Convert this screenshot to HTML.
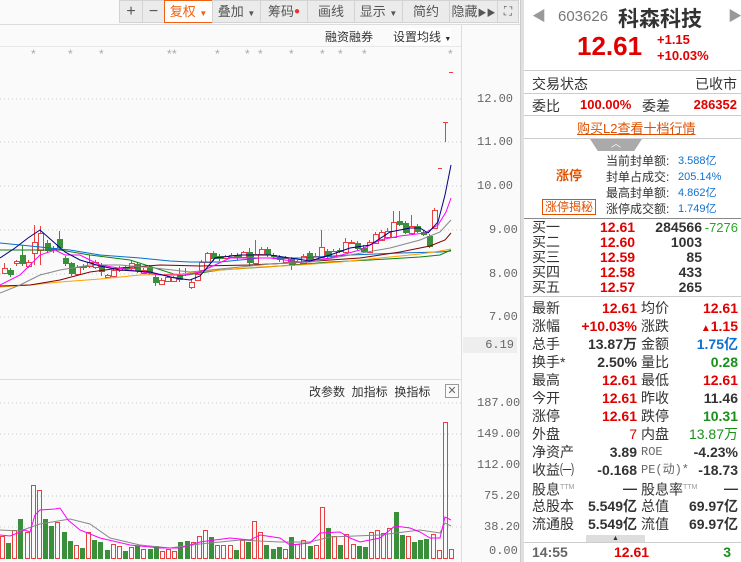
<!DOCTYPE html>
<html><head><meta charset="utf-8">
<style>
*{margin:0;padding:0;box-sizing:border-box}
body{width:741px;height:562px;overflow:hidden;background:#fafafa;font-family:"Liberation Sans","Noto Sans CJK SC",sans-serif;position:relative;color:#333}
.a{position:absolute;white-space:nowrap}
.tb{position:absolute;top:0;height:23px;background:#ebebeb;border:1px solid #d3d3d3;font-size:13px;color:#555;text-align:center;line-height:21px}
.rp{position:absolute;left:524px;top:0;width:217px;height:562px;background:#fff}
.lb{font-size:14px;color:#333}
.r{color:#e00000}.g{color:#1a8f1a}.b{color:#1070d0}.k{color:#333}
.sep{position:absolute;left:0;width:217px;height:1px;background:#ccc}
.ax{font-family:"Liberation Mono",monospace;font-size:12px;color:#666}
.row{position:absolute;left:0;width:217px;height:18px;line-height:18px;font-size:14px}
.row span{position:absolute;top:0;white-space:nowrap}
.l1{left:8px}.l2{left:117px}
.v1{right:104px;font-weight:bold}.v2{right:3px;font-weight:bold}
.br{position:absolute;left:0;width:217px;height:15px;line-height:15px;font-size:14px}
.br span{position:absolute;top:0;white-space:nowrap;font-weight:bold}
</style></head><body>
<div class="tb" style="left:119px;width:24px;font-size:16px">+</div>
<div class="tb" style="left:142px;width:23px;font-size:16px">−</div>
<div class="tb" style="left:164px;width:49px;border:1px solid #f06010;background:#fff;color:#f06010">复权 <span style="font-size:8px">▼</span></div>
<div class="tb" style="left:212px;width:49px">叠加 <span style="font-size:8px">▼</span></div>
<div class="tb" style="left:260px;width:48px">筹码<span style="color:#f03030;font-size:10px;vertical-align:top">●</span></div>
<div class="tb" style="left:307px;width:48px">画线</div>
<div class="tb" style="left:354px;width:49px">显示 <span style="font-size:8px">▼</span></div>
<div class="tb" style="left:402px;width:48px">简约</div>
<div class="tb" style="left:449px;width:49px">隐藏<span style="font-size:9px">▶▶</span></div>
<div class="tb" style="left:497px;width:22px;font-size:12px">⛶</div>
<div class="a" style="left:0;top:24px;width:520px;height:1px;background:#ddd"></div>
<div class="a" style="left:0;top:46px;width:461px;height:1px;background:#e8e8e8"></div>
<div class="a" style="left:461px;top:24px;width:1px;height:538px;background:#ddd"></div>
<div class="a" style="left:0;top:379px;width:461px;height:1px;background:#ddd"></div>
<div class="a" style="left:520px;top:0;width:4px;height:562px;background:#e0e0e0;border-left:1px solid #ccc"></div>
<div class="a" style="left:325px;top:28px;font-size:12px;color:#333">融资融券</div>
<div class="a" style="left:393px;top:28px;font-size:12px;color:#333;background:#fff">设置均线 <span style="font-size:7px">▼</span></div>
<div class="a" style="left:309px;top:383px;font-size:12px;color:#333">改参数&nbsp;&nbsp;加指标&nbsp;&nbsp;换指标</div>
<div class="a" style="left:445px;top:384px;width:14px;height:14px;border:1px solid #999;font-size:11px;line-height:12px;text-align:center;color:#666">✕</div>
<div class="a ax" style="left:477px;top:92px">12.00</div>
<div class="a ax" style="left:477px;top:135px">11.00</div>
<div class="a ax" style="left:477px;top:179px">10.00</div>
<div class="a ax" style="left:489px;top:223px">9.00</div>
<div class="a ax" style="left:489px;top:267px">8.00</div>
<div class="a ax" style="left:489px;top:310px">7.00</div>
<div class="a ax" style="left:463px;top:337px;width:54px;height:16px;background:#eee;text-align:right;padding-right:3px;line-height:16px">6.19</div>
<div class="a ax" style="left:477px;top:396px">187.00</div>
<div class="a ax" style="left:477px;top:427px">149.00</div>
<div class="a ax" style="left:477px;top:458px">112.00</div>
<div class="a ax" style="left:484px;top:489px">75.20</div>
<div class="a ax" style="left:484px;top:520px">38.20</div>
<div class="a ax" style="left:489px;top:544px">0.00</div>
<svg id="ch" class="a" style="left:0;top:0" width="461" height="562"></svg>
<div class="rp">
<div class="a" style="left:8px;top:6px;font-size:14px;color:#999">◀</div>
<div class="a" style="left:34px;top:8px;font-size:15px;color:#777">603626</div>
<div class="a" style="left:94px;top:3px;font-size:21px;font-weight:bold;color:#333">科森科技</div>
<div class="a" style="left:204px;top:6px;font-size:14px;color:#999">▶</div>
<div class="a r" style="left:53px;top:31px;font-size:26px;font-weight:bold">12.61</div>
<div class="a r" style="left:133px;top:32px;font-size:13px;font-weight:bold">+1.15</div>
<div class="a r" style="left:133px;top:48px;font-size:13px;font-weight:bold">+10.03%</div>
<div class="sep" style="top:70px"></div>
<div class="a lb" style="left:8px;top:74px">交易状态</div>
<div class="a lb" style="right:4px;top:74px">已收市</div>
<div class="sep" style="top:93px"></div>
<div class="a lb" style="left:8px;top:96px">委比</div>
<div class="a r" style="left:56px;top:97px;font-size:13px;font-weight:bold">100.00%</div>
<div class="a lb" style="left:118px;top:96px">委差</div>
<div class="a r" style="right:4px;top:97px;font-size:13px;font-weight:bold">286352</div>
<div class="sep" style="top:115px"></div>
<div class="a" style="left:53px;top:118px;font-size:13px;color:#e05000;text-decoration:underline">购买L2查看十档行情</div>
<div class="sep" style="top:138px"></div>
<div class="a" style="left:66px;top:139px;width:52px;height:12px;background:#aaa;clip-path:polygon(0 0,100% 0,85% 100%,15% 100%);color:#fff;font-size:10px;text-align:center;line-height:12px">︿</div>
<div class="a" style="left:32px;top:165px;font-size:13px;font-weight:bold;color:#e05000">涨停</div>
<div class="a" style="left:18px;top:199px;font-size:12px;color:#e05000;border:1px solid #e05000;padding:0 2px;line-height:14px">涨停揭秘</div>
<div class="a" style="left:82px;top:153px;font-size:12px;line-height:16px;color:#333">当前封单额:<br>封单占成交:<br>最高封单额:<br>涨停成交额:</div>
<div class="a b" style="left:154px;top:153px;font-size:11px;line-height:16px">3.588亿<br>205.14%<br>4.862亿<br>1.749亿</div>
<div class="sep" style="top:218px;background:#888"></div>
<div class="br" style="top:220px"><span class="l1" style="font-weight:normal">买一</span><span class="r" style="left:76px">12.61</span><span class="k" style="right:39px">284566</span><span style="right:3px;color:#2a2;font-weight:normal;font-size:13px">-7276</span></div>
<div class="br" style="top:235px"><span class="l1" style="font-weight:normal">买二</span><span class="r" style="left:76px">12.60</span><span class="k" style="right:39px">1003</span></div>
<div class="br" style="top:250px"><span class="l1" style="font-weight:normal">买三</span><span class="r" style="left:76px">12.59</span><span class="k" style="right:39px">85</span></div>
<div class="br" style="top:265px"><span class="l1" style="font-weight:normal">买四</span><span class="r" style="left:76px">12.58</span><span class="k" style="right:39px">433</span></div>
<div class="br" style="top:280px"><span class="l1" style="font-weight:normal">买五</span><span class="r" style="left:76px">12.57</span><span class="k" style="right:39px">265</span></div>
<div class="sep" style="top:296px"></div>
<div class="row" style="top:299px"><span class="l1">最新</span><span class="v1 r">12.61</span><span class="l2">均价</span><span class="v2 r">12.61</span></div>
<div class="row" style="top:317px"><span class="l1">涨幅</span><span class="v1 r">+10.03%</span><span class="l2">涨跌</span><span class="v2 r"><span style="position:static;font-size:10px">▲</span>1.15</span></div>
<div class="row" style="top:335px"><span class="l1">总手</span><span class="v1 k">13.87万</span><span class="l2">金额</span><span class="v2 b">1.75亿</span></div>
<div class="row" style="top:353px"><span class="l1">换手*</span><span class="v1 k">2.50%</span><span class="l2">量比</span><span class="v2 g">0.28</span></div>
<div class="row" style="top:371px"><span class="l1">最高</span><span class="v1 r">12.61</span><span class="l2">最低</span><span class="v2 r">12.61</span></div>
<div class="row" style="top:389px"><span class="l1">今开</span><span class="v1 r">12.61</span><span class="l2">昨收</span><span class="v2 k">11.46</span></div>
<div class="row" style="top:407px"><span class="l1">涨停</span><span class="v1 r">12.61</span><span class="l2">跌停</span><span class="v2 g">10.31</span></div>
<div class="row" style="top:425px"><span class="l1">外盘</span><span class="v1 r" style="font-weight:normal">7</span><span class="l2">内盘</span><span class="v2 g" style="font-weight:normal">13.87万</span></div>
<div class="row" style="top:443px"><span class="l1">净资产</span><span class="v1 k">3.89</span><span class="l2" style="font-family:'Liberation Mono',monospace;font-size:12px;color:#666">ROE</span><span class="v2 k">-4.23%</span></div>
<div class="row" style="top:461px"><span class="l1">收益㈠</span><span class="v1 k">-0.168</span><span class="l2" style="font-family:'Liberation Mono',monospace;font-size:12px;color:#666">PE(动)*</span><span class="v2 k">-18.73</span></div>
<div class="row" style="top:479px"><span class="l1">股息<sup style="font-size:7px;color:#999">TTM</sup></span><span class="v1 k">—</span><span class="l2">股息率<sup style="font-size:7px;color:#999">TTM</sup></span><span class="v2 k">—</span></div>
<div class="row" style="top:497px"><span class="l1">总股本</span><span class="v1 k">5.549亿</span><span class="l2">总值</span><span class="v2 k">69.97亿</span></div>
<div class="row" style="top:515px"><span class="l1">流通股</span><span class="v1 k">5.549亿</span><span class="l2">流值</span><span class="v2 k">69.97亿</span></div>
<div class="a" style="left:62px;top:535px;width:59px;height:7px;background:#ddd;font-size:7px;text-align:center;line-height:7px">▲</div>
<div class="sep" style="top:542px"></div>
<div class="a" style="left:8px;top:544px;font-size:14px;font-weight:bold;color:#666">14:55</div>
<div class="a r" style="left:90px;top:544px;font-size:14px;font-weight:bold">12.61</div>
<div class="a g" style="right:10px;top:544px;font-size:14px;font-weight:bold">3</div>
</div>
<script>
var s='';
function L(y){s+='<line x1="0" y1="'+y+'" x2="461" y2="'+y+'" stroke="#ccc" stroke-dasharray="1,3"/>';}
[99,142,186,230,274,317,403,434,465,496,527].forEach(L);
var st=[34,71,102,170,175,218,248,261,292,323,341,365,451];
st.forEach(function(x){s+='<text x="'+(x-3)+'" y="58" font-size="12" fill="#aaa" font-family="Liberation Sans">*</text>';});
var R='#e84040',G='#3a8f3a';
var c=[[4,273,268,263,274],[10,270,275,268,277],[16,263,261,260,266],[22,255,264,245,266],[28,266,262,260,268],[34,253,242,225,265],[40,250,233,226,265],[47,243,251,240,253],[53,248,250,246,253],[59,239,248,231,250],[65,258,264,256,266],[71,263,274,262,276],[77,274,267,265,275],[83,266,268,264,270],[89,266,262,255,268],[95,267,262,260,269],[101,265,272,263,276],[107,277,275,274,278],[113,276,270,268,277],[119,270,268,266,272],[125,267,269,265,271],[131,268,263,261,270],[137,264,271,262,273],[143,273,270,268,274],[149,267,273,265,275],[155,277,283,275,286],[161,284,280,278,285],[167,281,277,276,282],[173,281,277,276,282],[179,275,280,268,282],[185,273,274,268,276],[191,287,282,279,289],[197,280,274,272,281],[201,270,262,260,271],[207,262,253,252,263],[213,253,259,251,261],[219,256,259,254,261],[225,258,256,255,259],[231,257,255,253,258],[237,255,258,253,260],[243,257,252,251,258],[249,252,263,248,265],[255,263,254,240,264],[261,254,249,247,255],[267,249,255,247,257],[273,255,257,253,259],[279,257,260,255,262],[285,262,258,256,263],[291,259,266,257,270],[297,264,262,260,265],[303,263,256,254,264],[309,253,260,251,262],[315,259,256,253,260],[321,257,247,230,258],[327,251,257,249,259],[333,257,251,249,258],[339,250,252,248,253],[345,252,242,238,253],[351,243,242,240,244],[357,243,249,241,250],[363,248,252,245,253],[369,252,242,240,253],[375,243,234,232,244],[381,240,232,230,241],[387,237,231,228,238],[393,237,222,211,238],[399,221,225,211,226],[405,223,233,221,234],[411,233,226,215,234],[417,226,232,224,233],[423,232,235,230,236],[429,236,247,234,248],[434,228,210,208,229],[440,168,168,168,168],[445,122,122,122,142],[451,72,72,72,72]];
c.forEach(function(d){var x=d[0],o=d[1],cl=d[2],h=d[3],l=d[4];var up=cl<=o;var col=up?R:G;
 if(o==cl&&h==l){s+='<line x1="'+(x-2)+'" y1="'+o+'.5" x2="'+(x+2)+'" y2="'+o+'.5" stroke="'+R+'"/>';return;}
 if(x==445){s+='<line x1="445.5" y1="122" x2="445.5" y2="142" stroke="'+R+'"/><line x1="443" y1="122.5" x2="448" y2="122.5" stroke="'+R+'"/>';return;}
 var t=Math.min(o,cl),b=Math.max(o,cl);if(b-t<1)b=t+1;
 s+='<line x1="'+(x+.5)+'" y1="'+h+'" x2="'+(x+.5)+'" y2="'+t+'" stroke="'+col+'"/><line x1="'+(x+.5)+'" y1="'+b+'" x2="'+(x+.5)+'" y2="'+l+'" stroke="'+col+'"/>';
 if(up)s+='<rect x="'+(x-2)+'.5" y="'+t+'.5" width="5" height="'+(b-t)+'" fill="#fafafa" stroke="'+R+'"/>';
 else s+='<rect x="'+(x-2)+'" y="'+t+'" width="6" height="'+(b-t)+'" fill="'+G+'"/>';
});
function P(col,pts,w){s+='<polyline fill="none" stroke="'+col+'" stroke-width="'+(w||1)+'" points="'+pts+'"/>';}
P('#0070d0','0,243 20,245 50,248 70,250 100,255 140,258 170,261 190,262 220,262 260,258 300,258 350,255 400,253 440,252 451,251');
P('#108010','0,250 60,250 90,255 130,260 180,276 220,270 280,266 330,262 370,260 420,257 440,255 451,250');
P('#ffa000','0,287 30,285 60,282 100,279 140,275 180,274 220,270 260,267 300,265 340,262 380,258 420,254 440,251 451,249');
P('#800000','0,286 30,285 60,280 90,272 120,268 160,265 200,266 250,265 290,263 330,260 360,258 400,252 430,246 445,240 451,233');
P('#888','0,293 20,285 40,275 60,270 90,265 120,265 155,268 190,272 230,268 270,264 310,262 350,255 390,248 420,240 440,232 451,220');
P('#ff00ff','0,285 20,275 40,255 55,250 65,255 80,255 100,265 130,270 160,275 185,275 200,272 230,258 270,258 300,262 330,258 360,250 380,240 400,236 425,233 438,225 446,212 451,198');
P('#000080','0,258 15,248 28,238 40,230 57,245 65,252 80,260 100,266 120,270 150,272 175,278 190,280 200,276 215,258 240,255 270,255 290,258 310,261 330,255 350,248 370,245 390,232 410,228 420,228 428,233 438,222 445,195 451,165');
var vh=[[22,1],[16,0],[28,1],[40,0],[26,1],[73,1],[68,1],[40,0],[33,0],[36,1],[27,0],[18,0],[13,1],[11,0],[26,1],[19,0],[17,0],[9,0],[14,1],[12,1],[8,0],[11,1],[13,0],[9,1],[10,0],[13,0],[7,1],[9,1],[7,1],[17,0],[18,0],[16,1],[22,1],[28,1],[22,0],[13,1],[13,1],[13,1],[9,0],[18,1],[17,0],[37,1],[26,1],[14,0],[10,0],[12,0],[9,1],[22,0],[14,1],[18,1],[13,0],[13,1],[51,1],[31,0],[22,1],[14,0],[24,1],[14,1],[13,0],[12,0],[26,1],[28,1],[25,1],[30,1],[47,0],[24,0],[22,1],[17,0],[19,0],[20,0],[24,1],[8,1],[136,1],[9,1]];
var n=vh.length;
vh.forEach(function(d,i){var x=Math.round(2+i*(449/(n-1)));if(i==n-2)x=445;if(i==n-3)x=439;var h=d[0];
 if(d[1])s+='<rect x="'+(x-2)+'.5" y="'+(558-h)+'.5" width="4" height="'+h+'" fill="none" stroke="'+R+'"/>';
 else s+='<rect x="'+(x-2)+'" y="'+(559-h)+'" width="5" height="'+h+'" fill="'+G+'"/>';});
P('#888','0,530 20,531 40,524 70,519 90,524 110,538 140,545 170,548 200,544 240,540 280,542 310,542 330,537 380,535 420,530 440,533 445,523 451,526');
P('#ff00ff','0,535 10,536 25,530 30,532 35,515 40,510 55,509 60,508 68,520 80,530 100,538 130,545 160,548 180,548 200,542 230,538 250,540 260,535 280,538 290,545 310,543 320,533 340,532 350,538 360,542 380,538 395,526 410,528 420,532 430,538 440,538 445,517 451,520');
document.getElementById('ch').innerHTML=s;
</script>
</body></html>
